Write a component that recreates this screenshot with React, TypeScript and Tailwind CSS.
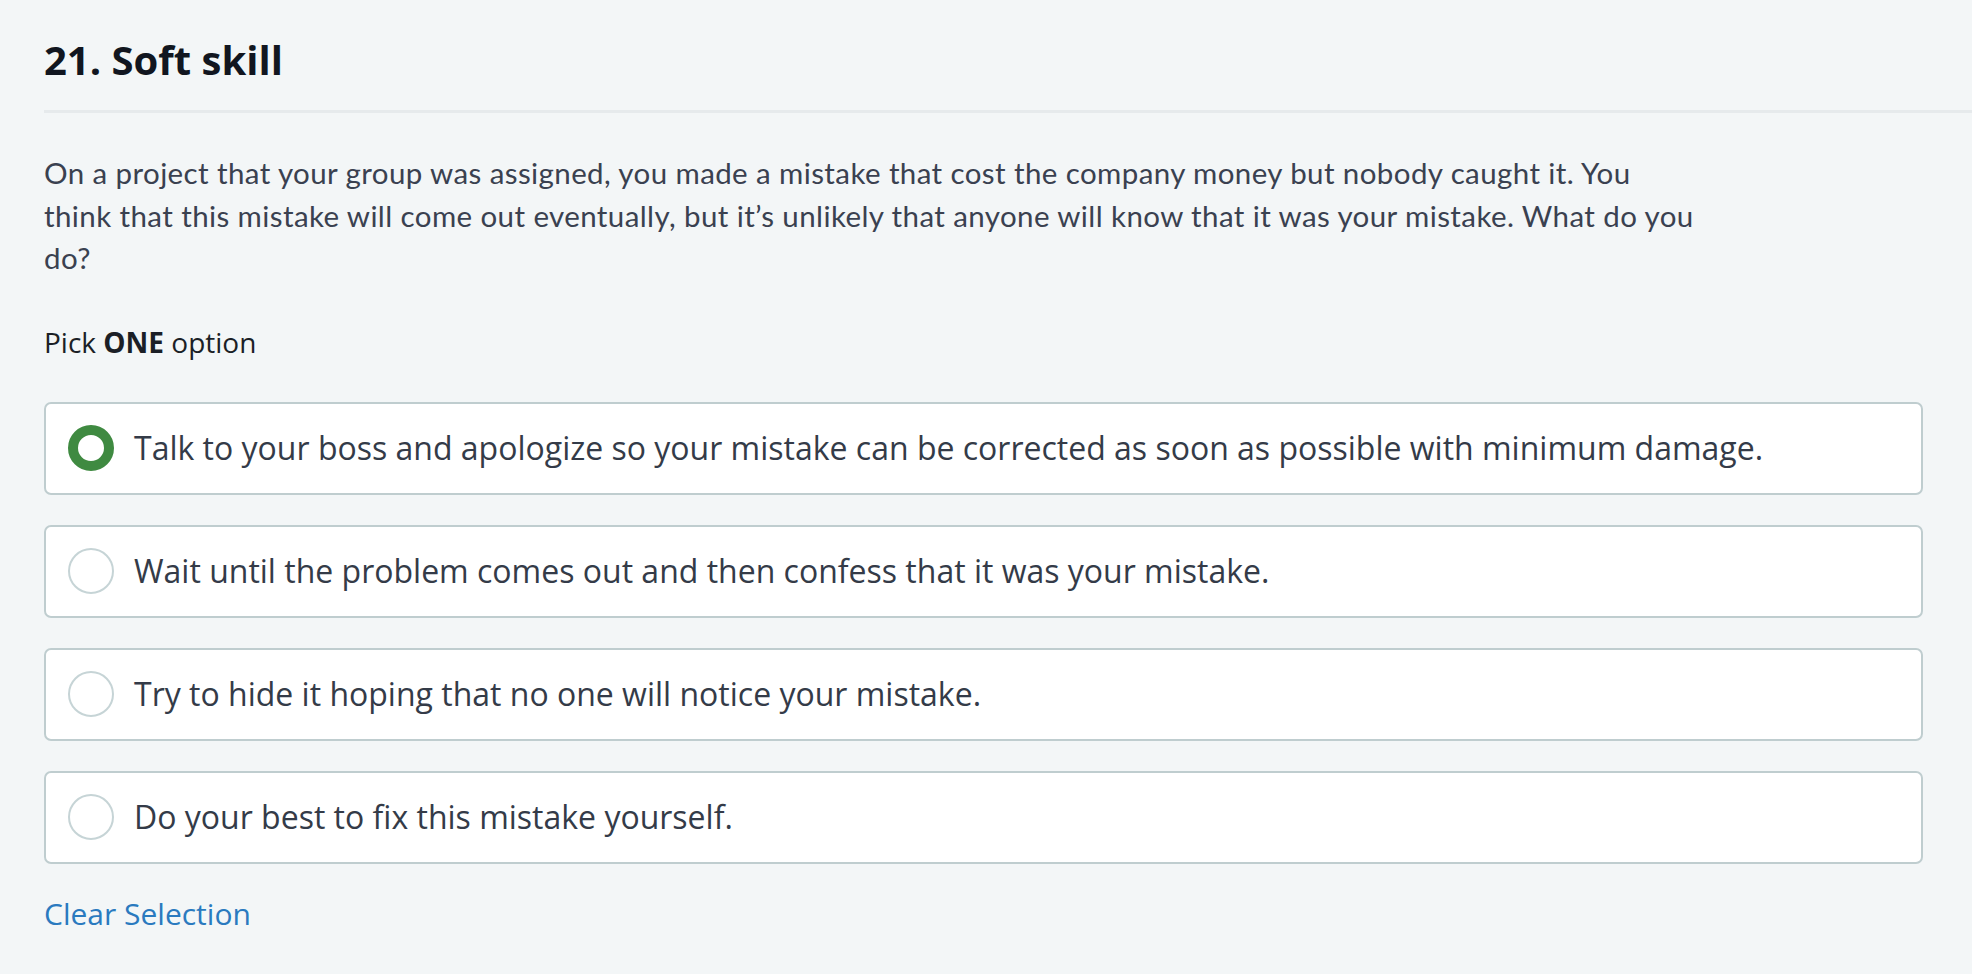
import React, { useState } from "react";

const options = [
  "Talk to your boss and apologize so your mistake can be corrected as soon as possible with minimum damage.",
  "Wait until the problem comes out and then confess that it was your mistake.",
  "Try to hide it hoping that no one will notice your mistake.",
  "Do your best to fix this mistake yourself.",
];

const openSans = { fontFamily: '"Open Sans", "Noto Sans", sans-serif' };
const bodyFont = { fontFamily: 'Lato, "Open Sans", sans-serif' };

const Radio = ({ checked }: { checked: boolean }) => (
  <span
    className={
      checked
        ? "block h-[46px] w-[46px] shrink-0 rounded-full border-[10px] border-[#3f8a41] bg-white"
        : "block h-[46px] w-[46px] shrink-0 rounded-full border-2 border-[#c6d4d6] bg-white"
    }
  />
);

const App = () => {
  const [selected, setSelected] = useState<number | null>(0);

  return (
    <section className="min-h-screen bg-[#f3f6f7] pl-[44px] pt-[36px]" style={openSans}>
      <h1 className="text-[40px] leading-[48px] font-bold text-[#111620] pb-[26px] border-b-[3px] border-[#e6eaec]">
        21. Soft skill
      </h1>

      <p
        className="mt-[39px] w-[1658px] text-[29.5px] leading-[42.5px] tracking-[0.4px] text-[#3a4150]"
        style={bodyFont}
      >
        On a project that your group was assigned, you made a mistake that cost the company money but
        nobody caught it. You think that this mistake will come out eventually, but it’s unlikely that
        anyone will know that it was your mistake. What do you do?
      </p>

      <p className="mt-[42px] text-[28px] leading-[40px] text-[#1b1f26]">
        Pick <strong className="font-bold">ONE</strong> option
      </p>

      <div className="mt-[40px] mr-[49px] flex flex-col gap-[30px]">
        {options.map((option, index) => (
          <button
            key={option}
            type="button"
            onClick={() => setSelected(index)}
            className="flex h-[93px] items-center gap-[20px] rounded-[7px] border-2 border-[#bfcdcf] bg-white px-[22px] text-left"
          >
            <Radio checked={selected === index} />
            <span className="text-[32px] leading-[40px] text-[#343b48]">{option}</span>
          </button>
        ))}
      </div>

      <button
        type="button"
        onClick={() => setSelected(null)}
        className="mt-[30px] text-[30px] leading-[40px] text-[#2a7abf]"
      >
        Clear Selection
      </button>
    </section>
  );
};

export default App;
